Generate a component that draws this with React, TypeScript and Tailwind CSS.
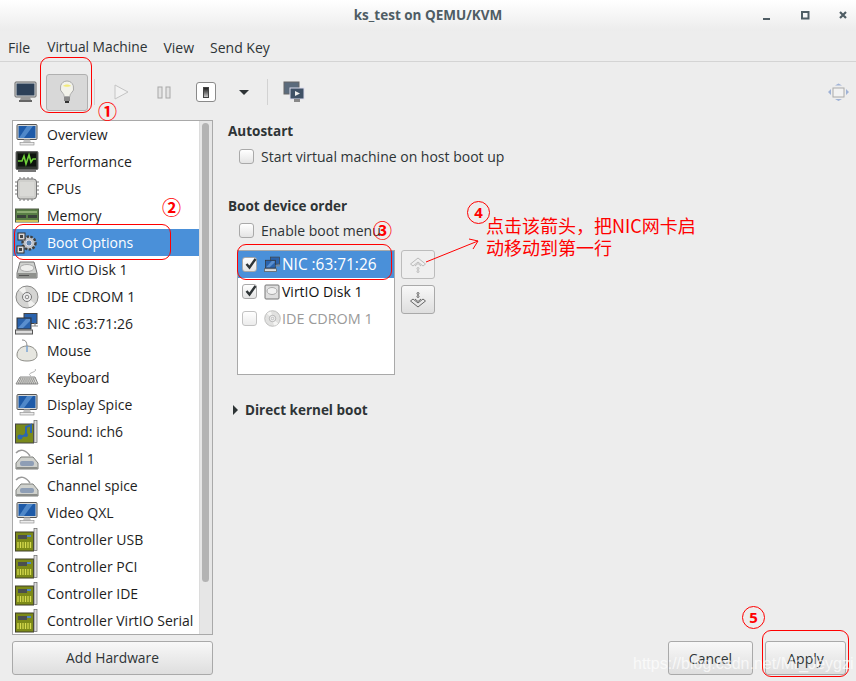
import React from "react";

const Monitor = ({ s = 24 }: { s?: number }) => (
  <svg width={s} height={s} viewBox="0 0 24 24">
    <rect x="2" y="1.500" width="20" height="15" rx="1" fill="#d4d6d6" stroke="#555" />
    <rect x="3.500" y="3" width="17" height="12" fill="#1d5aa8" />
    <path d="M4 15L12 3h6L9 15z" fill="#4f88c9" />
    <path d="M9 16.500h6l1 3H8z" fill="#c4c4c4" />
    <rect x="5" y="19.500" width="14" height="2.500" fill="#ececec" stroke="#888" strokeWidth="0.6" />
  </svg>
);

const Perf = () => (
  <svg width="24" height="24" viewBox="0 0 24 24">
    <rect x="1" y="1.500" width="22" height="18" rx="1" fill="#30352f" stroke="#666" />
    <rect x="3" y="3.500" width="18" height="13" fill="#0d140d" />
    <path d="M3 11h4l2-5 2 8 3-9 2 7 2-3h3" fill="none" stroke="#6fd13a" strokeWidth="1.6" />
    <rect x="3" y="20" width="18" height="2" fill="#777" />
  </svg>
);

const Chip = () => (
  <svg width="24" height="24" viewBox="0 0 24 24">
    <path d="M0 5h24M0 9h24M0 13h24M0 17h24M5 0v24M9 0v24M13 0v24M17 0v24" stroke="#777" strokeWidth="1" />
    <rect x="2.500" y="2" width="19" height="20" rx="3" fill="#cfcfcc" stroke="#777" />
    <rect x="5" y="5" width="14" height="14" fill="#d9d9d6" />
  </svg>
);

const Memory = () => (
  <svg width="24" height="24" viewBox="0 0 24 24">
    <rect x="0.500" y="5" width="23" height="13" fill="#587e45" stroke="#4e5b44" />
    <rect x="2" y="7" width="20" height="2" fill="#8dad72" />
    <rect x="2" y="11" width="9" height="3" fill="#39423a" />
    <rect x="13" y="11" width="9" height="3" fill="#39423a" />
    <rect x="1" y="16" width="22" height="2" fill="#c9c45c" />
  </svg>
);

const Gears = () => (
  <svg width="24" height="24" viewBox="0 0 24 24">
    <circle cx="14" cy="12" r="6.500" fill="#bfc3c7" stroke="#3f3f3f" strokeWidth="2.400" strokeDasharray="2.500 1.400" />
    <circle cx="14" cy="12" r="3" fill="#5f86b0" stroke="#dde" />
    <rect x="3" y="2" width="7" height="7" fill="#d8d8d8" stroke="#333" />
    <rect x="5" y="4" width="3" height="3" fill="#444" />
    <rect x="2" y="15" width="7" height="7" fill="#d8d8d8" stroke="#333" />
    <rect x="4" y="17" width="3" height="3" fill="#444" />
  </svg>
);

const Disk = () => (
  <svg width="24" height="24" viewBox="0 0 24 24">
    <path d="M5 4h14l3 11v5H2v-5z" fill="#d0d2cf" stroke="#777" />
    <ellipse cx="12" cy="10" rx="7" ry="3.500" fill="#eeeeec" stroke="#aaa" />
    <rect x="2.500" y="15" width="19" height="5" fill="#8f918d" />
    <rect x="4" y="17" width="10" height="1" fill="#555" />
  </svg>
);

const Cdrom = ({ s = 24, faded = false }: { s?: number; faded?: boolean }) => (
  <svg width={s} height={s} viewBox="0 0 24 24" opacity={faded ? 0.7 : 1}>
    <circle cx="12" cy="12" r="11" fill="#d5d5d3" stroke="#8a8a88" />
    <path d="M12 12L4 5a11 11 0 0 1 6-3zM12 12l8 7a11 11 0 0 1-6 3z" fill="#f2f2f0" />
    <circle cx="12" cy="12" r="4.500" fill="#eee" stroke="#777" />
    <circle cx="12" cy="12" r="1.800" fill="#ededed" stroke="#888" />
  </svg>
);

const Nic = ({ s = 24 }: { s?: number }) => (
  <svg width={s} height={s} viewBox="0 0 24 24">
    <rect x="9" y="1.500" width="13" height="10" fill="#2a63ad" stroke="#444" />
    <rect x="2" y="6" width="14" height="11" fill="#2a63ad" stroke="#333" />
    <path d="M3 16L11 7h4v2L8 16z" fill="#5a8fcf" />
    <rect x="0.500" y="18" width="17" height="4" fill="#ddd" stroke="#555" />
    <path d="M16 14h7M20 11v3" stroke="#888" strokeWidth="1.200" />
  </svg>
);

const Mouse = () => (
  <svg width="24" height="24" viewBox="0 0 24 24">
    <path d="M7 1c3 0 5 1 5 7" fill="none" stroke="#888" />
    <path d="M12 7c6 0 10 4 10 9 0 4-4 6-10 6S2 20 2 16c0-5 4-9 10-9z" fill="#e6e6e0" stroke="#8c8c86" />
    <path d="M12 7v6" stroke="#7ba4d4" strokeWidth="1.500" />
  </svg>
);

const Keyboard = () => (
  <svg width="24" height="24" viewBox="0 0 24 24">
    <path d="M20 3c2 2-2 3-4 4s-2 2 0 3" fill="none" stroke="#aaa" />
    <path d="M5 11h15l3 7H1z" fill="#dcdcd8" stroke="#888" />
    <path d="M5 13h15M4 15h16M3 17h18" stroke="#666" strokeWidth="1" strokeDasharray="1.400 0.700" />
  </svg>
);

const Sound = () => (
  <svg width="24" height="24" viewBox="0 0 24 24">
    <rect x="0.500" y="4" width="18" height="19" fill="#7a8a1c" stroke="#444" />
    <rect x="19" y="0.500" width="3" height="22" fill="#ddd" stroke="#666" strokeWidth="0.700" />
    <path d="M5 17l6-2V7l5-2v8" fill="none" stroke="#2d66b0" strokeWidth="2" />
    <circle cx="5" cy="17" r="2.500" fill="#2d66b0" />
    <circle cx="11" cy="15" r="2" fill="#2d66b0" />
  </svg>
);

const Serial = () => (
  <svg width="24" height="24" viewBox="0 0 24 24">
    <path d="M1 6c4-5 10-3 14 3" fill="none" stroke="#999" strokeWidth="1.500" />
    <path d="M6 10h12l5 6v6H1v-6z" fill="#cfd1cd" stroke="#7e807c" />
    <rect x="5" y="14" width="14" height="5" rx="2" fill="#8e9eb5" />
    <rect x="1.500" y="20" width="21" height="2" fill="#8b8d89" />
  </svg>
);

const Card = () => (
  <svg width="24" height="24" viewBox="0 0 24 24">
    <rect x="0.500" y="4" width="18" height="19" fill="#7c8a18" stroke="#3f3f2a" />
    <rect x="3" y="7" width="9" height="4" fill="#4a4f4f" />
    <rect x="12" y="7" width="4" height="2" fill="#4f86c6" />
    <path d="M3 20v-6M5.500 20v-6M8 20v-6M10.500 20v-6M13 20v-6M15.500 20v-6" stroke="#d6db4f" strokeWidth="1.300" />
    <rect x="19" y="0.500" width="3" height="22" fill="#ddd" stroke="#666" strokeWidth="0.700" />
  </svg>
);

const sideItems: [string, React.ReactNode][] = [
  ["Overview", <Monitor key="a" />],
  ["Performance", <Perf key="b" />],
  ["CPUs", <Chip key="c" />],
  ["Memory", <Memory key="d" />],
  ["Boot Options", <Gears key="e" />],
  ["VirtIO Disk 1", <Disk key="f" />],
  ["IDE CDROM 1", <Cdrom key="g" />],
  ["NIC :63:71:26", <Nic key="h" />],
  ["Mouse", <Mouse key="i" />],
  ["Keyboard", <Keyboard key="j" />],
  ["Display Spice", <Monitor key="k" />],
  ["Sound: ich6", <Sound key="l" />],
  ["Serial 1", <Serial key="m" />],
  ["Channel spice", <Serial key="n" />],
  ["Video QXL", <Monitor key="o" />],
  ["Controller USB", <Card key="p" />],
  ["Controller PCI", <Card key="q" />],
  ["Controller IDE", <Card key="r" />],
  ["Controller VirtIO Serial", <Card key="s" />],
];

const Check = ({ checked = false, dim = false }: { checked?: boolean; dim?: boolean }) => (
  <span className={`relative w-[15px] h-[15px] shrink-0 rounded-[3px] border border-[#a9a9a9] bg-gradient-to-b from-white to-[#e4e4e4] ${dim ? "opacity-70" : ""}`}>
    {checked && (
      <svg className="absolute left-[1px] top-[-1px]" width="14" height="14" viewBox="0 0 14 14">
        <path d="M2.500 7l3 3.500L11.500 2" fill="none" stroke="#2e3436" strokeWidth="2.400" />
      </svg>
    )}
  </span>
);

const Sep = () => <div className="w-px h-[26px] bg-[#d2d2d2]" />;

const Btn = ({ label, w }: { label: string; w: string }) => (
  <div className={`${w} h-[34px] flex items-center justify-center rounded-[3px] border border-[#a9a9a9] bg-gradient-to-b from-[#f8f8f8] to-[#dedede] text-[#2e3436] text-[14px]`}>
    {label}
  </div>
);

const circle = "absolute w-[23px] h-[23px] rounded-full border border-[#ff0000] flex items-center justify-center text-[#ff0000] text-[15px] font-bold";
const outline = "absolute rounded-[9px] border border-[#ff0000]";
const glyph = "absolute text-[#ff0000] text-[19px] leading-[19px] font-bold";

export default function App() {
  return (
    <div className="relative w-[856px] h-[681px] overflow-hidden bg-[#ededed] flex flex-col font-['Open_Sans','Noto_Sans_CJK_SC',sans-serif] text-[14px] text-[#2e3436]">
      <div className="h-[31px] shrink-0 flex items-center justify-center relative bg-gradient-to-b from-white to-[#ececec] font-bold text-[#4f5d64] text-[13.5px]">
        ks_test on QEMU/KVM
        <svg className="absolute left-[761px] top-[9px]" width="90" height="14" viewBox="0 0 90 14">
          <rect x="2" y="9" width="7" height="2" fill="#4f5d64" />
          <rect x="41" y="3" width="6.500" height="6.500" fill="none" stroke="#4f5d64" strokeWidth="2" />
          <path d="M79 3l6 6M85 3l-6 6" stroke="#4f5d64" strokeWidth="2.200" />
        </svg>
      </div>
      <div className="h-[31px] shrink-0 flex items-center pl-[8px] pt-[3px] border-b border-[#d4d4d4]">
        <span>File</span>
        <span className="ml-[17px] text-[13.8px]">Virtual Machine</span>
        <span className="ml-[16px]">View</span>
        <span className="ml-[16px]">Send Key</span>
      </div>
      <div className="h-[57px] shrink-0 flex items-center pl-[14px] pt-[3px]">
        <svg width="23" height="22" viewBox="0 0 23 22">
          <rect x="1" y="1" width="21" height="15" rx="1" fill="#d8dadb" stroke="#666" />
          <rect x="2.500" y="2.500" width="18" height="12" fill="#2c4058" />
          <path d="M7 16h9l1 3H6z" fill="#999" />
          <rect x="5" y="19" width="13" height="2" fill="#666" />
        </svg>
        <div className="ml-[9px] w-[42px] h-[37px] rounded-[3px] border border-[#b0b0b0] bg-[#d8d8d8] flex items-center justify-center">
          <svg width="16" height="24" viewBox="0 0 16 24">
            <path d="M8 1a7 7 0 0 0-4 12.500c1 1 1 2 1 3h6c0-1 0-2 1-3A7 7 0 0 0 8 1z" fill="#f2f2ea" stroke="#aaa" />
            <path d="M4 6c2-2 6-2 8 0-2 1-6 1-8 0z" fill="#f2ea7a" />
            <rect x="5" y="17" width="6" height="4" fill="#888" />
            <rect x="6" y="21" width="4" height="2" fill="#333" />
          </svg>
        </div>
        <div className="ml-[6px]"><Sep /></div>
        <svg className="ml-[19px]" width="15" height="16" viewBox="0 0 15 16">
          <path d="M1 1l13 7-13 7z" fill="#f2f2f2" stroke="#c4c4c4" />
        </svg>
        <svg className="ml-[28px]" width="14" height="13" viewBox="0 0 14 13">
          <rect x="1" y="1" width="4" height="11" fill="#e4e4e4" stroke="#a8a8a8" />
          <rect x="9" y="1" width="4" height="11" fill="#e4e4e4" stroke="#a8a8a8" />
        </svg>
        <div className="ml-[25px] w-[20px] h-[20px] rounded-[3px] border border-[#8a8a8a] bg-white flex items-center justify-center">
          <div className="w-[6px] h-[11px] bg-gradient-to-b from-[#222] to-[#ccc] border border-[#444]" />
        </div>
        <div className="ml-[23px] w-0 h-0 border-x-[5px] border-x-transparent border-t-[5px] border-t-[#2e3436]" />
        <div className="ml-[18px]"><Sep /></div>
        <svg className="ml-[15px]" width="22" height="22" viewBox="0 0 22 22">
          <rect x="1" y="1" width="15" height="12" fill="#5b6b7c" stroke="#666" />
          <rect x="7" y="7" width="14" height="11" fill="#3f5166" stroke="#dde" />
          <path d="M12 10l5 2.500-5 2.500z" fill="#eee" />
          <rect x="11" y="18" width="6" height="3" fill="#888" />
        </svg>
        <svg className="ml-[522px]" width="22" height="20" viewBox="0 0 22 20">
          <rect x="6" y="6" width="11" height="9" fill="#f2f2f2" stroke="#aaa" />
          <path d="M8 3.500l3.500-2 3.500 2zM8 17l3.500 2 3.500-2zM4 7v6L1 10zM19 7v6l3-3z" fill="#9fb2d6" />
        </svg>
      </div>
      <div className="flex-1 flex gap-[15px] pl-[12px] pt-[1px] min-h-0">
        <div className="w-[201px] flex flex-col">
          <div className="h-[515px] flex border border-[#a9a9a9] bg-white overflow-hidden">
            <div className="flex-1 min-w-0">
              {sideItems.map(([name, icon]) => (
                <div key={name} className={`h-[27px] flex items-center whitespace-nowrap ${name === "Boot Options" ? "bg-[#4a90d9] text-white" : "text-[#1e1e1e]"}`}>
                  <span className="w-[34px] pl-[2px] shrink-0 flex">{icon}</span>
                  {name}
                </div>
              ))}
            </div>
            <div className="w-[13px] shrink-0 bg-[#e6e6e6] border-l border-[#dcdcdc] pt-[2px] pl-[2px]">
              <div className="w-[7px] h-[459px] rounded-full bg-[#b3b3b3]" />
            </div>
          </div>
          <div className="mt-[6px] h-[34px] flex items-center justify-center rounded-[3px] border border-[#a9a9a9] bg-gradient-to-b from-[#f8f8f8] to-[#dedede] text-[13.8px]">
            Add Hardware
          </div>
        </div>
        <div className="flex-1 flex flex-col pt-[2px] min-w-0">
          <div className="font-bold text-[13.5px] leading-[18px]">Autostart</div>
          <div className="mt-[6px] ml-[11px] flex items-center gap-[7px]">
            <Check />
            <span>Start virtual machine on host boot up</span>
          </div>
          <div className="mt-[30px] font-bold text-[13.5px] leading-[18px]">Boot device order</div>
          <div className="mt-[6px] ml-[11px] flex items-center gap-[7px] leading-[19px]">
            <Check />
            <span>Enable boot menu</span>
          </div>
          <div className="mt-[10px] ml-[9px] flex gap-[6px]">
            <div className="w-[158px] h-[125px] border border-[#a9a9a9] bg-white">
              <div className="h-[27px] flex items-center pl-[4px] bg-[#4a90d9] text-white text-[15.4px]">
                <Check checked />
                <span className="ml-[7px] w-[18px] flex"><Nic s={17} /></span>
                <span>NIC :63:71:26</span>
              </div>
              <div className="h-[27px] flex items-center pl-[4px] text-[#111] text-[14px]">
                <Check checked />
                <span className="ml-[7px] w-[18px] flex">
                  <svg width="16" height="16" viewBox="0 0 16 16">
                    <rect x="1" y="1" width="14" height="14" rx="1" fill="#dedede" stroke="#777" />
                    <ellipse cx="8" cy="7" rx="5" ry="3.500" fill="#f2f2f2" stroke="#aaa" />
                  </svg>
                </span>
                <span>VirtIO Disk 1</span>
              </div>
              <div className="h-[27px] flex items-center pl-[4px] text-[#9a9a9a] text-[14.4px]">
                <Check dim />
                <span className="ml-[7px] w-[18px] flex"><Cdrom s={17} faded /></span>
                <span>IDE CDROM 1</span>
              </div>
            </div>
            <div className="flex flex-col gap-[6px]">
              <div className="w-[34px] h-[29px] rounded-[3px] border border-[#bcbcbc] bg-[#efefef] flex items-center justify-center">
                <svg width="18" height="18" viewBox="0 0 18 18" fill="none" stroke="#bbb">
                  <path d="M1.500 8L9 2l7.500 6-2.500 2L9 6l-5 4z" />
                  <path d="M6 10l3-2.500 3 2.500" />
                  <circle cx="9" cy="12.500" r="1" />
                  <circle cx="9" cy="15.500" r="1" />
                </svg>
              </div>
              <div className="w-[34px] h-[29px] rounded-[3px] border border-[#a9a9a9] bg-gradient-to-b from-[#f8f8f8] to-[#dedede] flex items-center justify-center">
                <svg width="18" height="18" viewBox="0 0 18 18" fill="none" stroke="#666">
                  <path d="M1.500 10L9 16l7.500-6-2.500-2L9 12 4 8z" />
                  <path d="M6 8l3 2.500L12 8" />
                  <circle cx="9" cy="5.500" r="1" />
                  <circle cx="9" cy="2.500" r="1" />
                </svg>
              </div>
            </div>
          </div>
          <div className="mt-[26px] flex items-center gap-[7px] ml-[5px] font-bold text-[13.5px] leading-[18px]">
            <div className="w-0 h-0 border-y-[5px] border-y-transparent border-l-[5px] border-l-[#2e3436]" />
            Direct kernel boot
          </div>
          <div className="flex-1" />
          <div className="flex justify-end gap-[12px] pr-[10px] pb-[6px]">
            <Btn label="Cancel" w="w-[85px]" />
            <Btn label="Apply" w="w-[81px]" />
          </div>
        </div>
      </div>

      {/* red annotations drawn over the window */}
      <div className={`${outline} left-[40px] top-[57px] w-[52px] h-[56px]`} />
      <div className={`${outline} left-[14px] top-[224px] w-[157px] h-[36px]`} />
      <div className={`${outline} left-[237px] top-[244px] w-[155px] h-[36px]`} />
      <div className={`${outline} left-[762px] top-[630px] w-[87px] h-[47px]`} />
      <span className={`${glyph} left-[98px] top-[103px]`}>①</span>
      <span className={`${glyph} left-[162px] top-[199px]`}>②</span>
      <span className={`${glyph} left-[373px] top-[222px]`}>③</span>
      <div className={`${circle} left-[467px] top-[201px]`}>4</div>
      <div className={`${circle} left-[742px] top-[606px]`}>5</div>
      <div className="absolute left-[486px] top-[214px] w-[225px] text-[#ff0000] text-[18px] leading-[22px] font-['Noto_Sans_CJK_SC',sans-serif]">
        {"点击该箭头\uFF0C把NIC网卡启"}
        <br />
        动移动到第一行
      </div>
      <svg className="absolute left-[420px] top-[235px]" width="65" height="32" viewBox="0 0 65 32" fill="none" stroke="#ff0000">
        <path d="M6 27L58 6M49 4l9 2-5 8" />
      </svg>
      <div className="absolute left-[633px] top-[652px] text-white/70 text-[16px] font-['Liberation_Sans',sans-serif] whitespace-nowrap">
        https://blog.csdn.net/Mr_Jeygzi
      </div>
    </div>
  );
}
